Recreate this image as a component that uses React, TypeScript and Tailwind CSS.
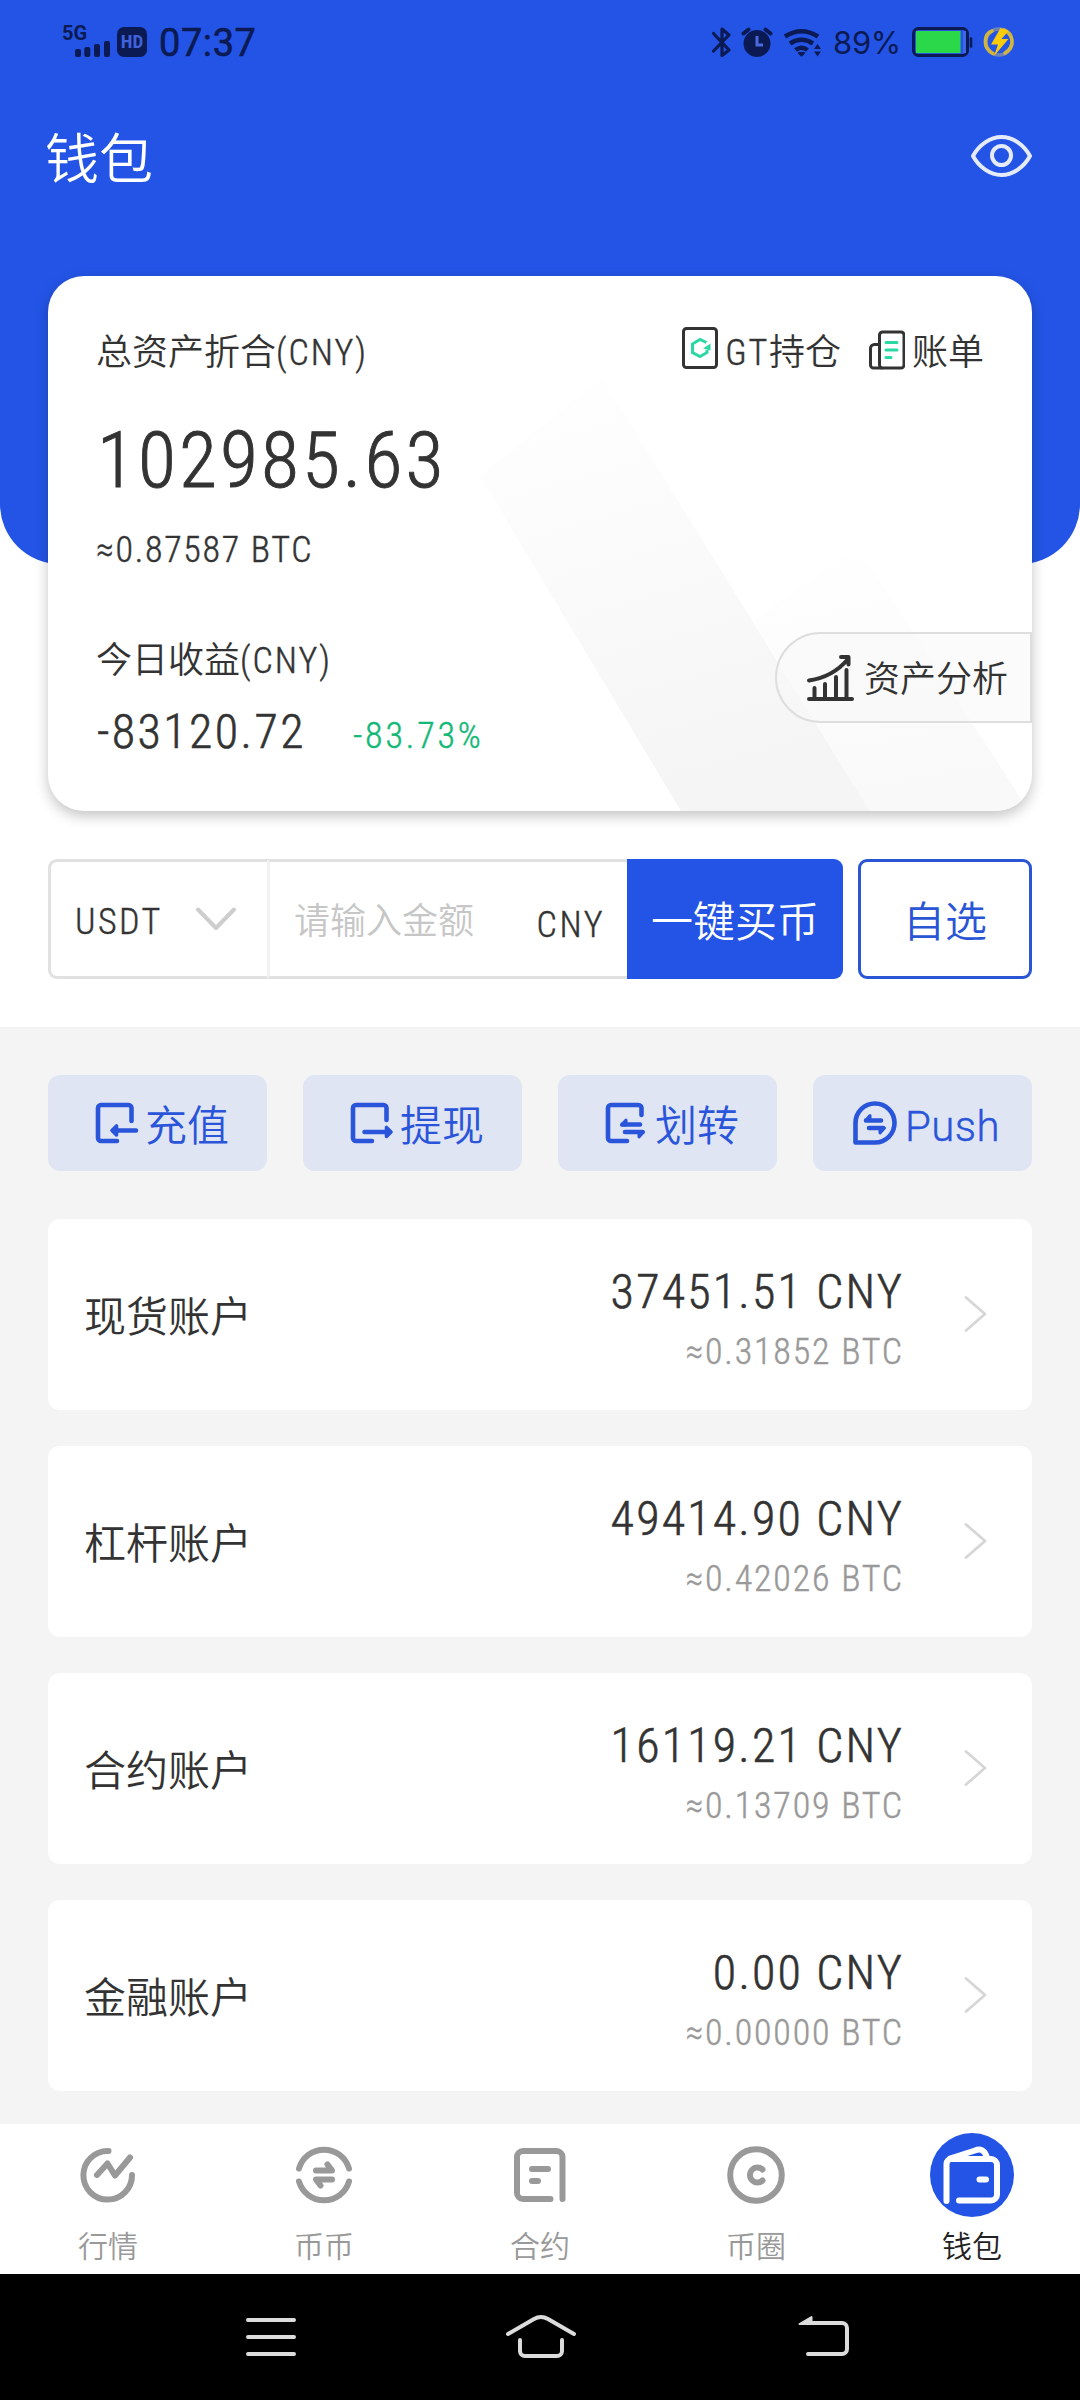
import type { ReactNode } from "react";

const BLUE = "#2354e6";
const INK = "#0b1a52";

/** Narrow DIN-like face for digits and Latin letters. */
function Din({ children, className = "tracking-[0.047em]" }: { children: ReactNode; className?: string }) {
  return (
    <span className={`whitespace-nowrap [font-stretch:75%] [-webkit-text-stroke:0.012em_currentColor] ${className}`}>
      {children}
    </span>
  );
}

function Icon({
  box,
  w,
  h,
  className = "",
  color = "currentColor",
  sw = 4,
  children,
}: {
  box: string;
  w: number;
  h: number;
  className?: string;
  color?: string;
  sw?: number;
  children: ReactNode;
}) {
  return (
    <svg
      viewBox={box}
      width={w}
      height={h}
      className={`shrink-0 ${className}`}
      fill="none"
      stroke={color}
      strokeWidth={sw}
      strokeLinecap="round"
      strokeLinejoin="round"
    >
      {children}
    </svg>
  );
}

function StatusBar() {
  return (
    <div className="flex h-[84px] items-center justify-between pr-[64px] pl-[62px] text-[#0b1a52]">
      <div className="flex items-center">
        <div className="relative h-[34px] w-[49px]">
          <span className="absolute top-[-2px] left-0 text-[20px] leading-[20px] font-bold">5G</span>
          <Icon box="75 39 36 18" w={36} h={18} color="none" className="absolute bottom-[1px] left-[13px]">
            <rect x="75" y="48" width="6" height="8" rx="2" fill={INK} />
            <rect x="84.3" y="46" width="6" height="10" rx="2" fill={INK} />
            <rect x="94" y="43" width="6" height="13" rx="2" fill={INK} />
            <rect x="104" y="40" width="6" height="16" rx="2" fill={INK} />
          </Icon>
        </div>
        <div className="ml-[6px] flex h-[30px] w-[30px] items-center justify-center rounded-[7px] bg-[#0b1a52] text-[19px] leading-[30px] font-bold text-[#3f63dc] [font-stretch:85%]">
          HD
        </div>
        <span className="ml-[12px] pt-px text-[38px] leading-[40px] font-normal tracking-[0.015em] [-webkit-text-stroke:0.6px_currentColor]">
          07:37
        </span>
      </div>
      <div className="flex items-center">
        <Icon box="710 26 22 32" w={22} h={32} sw={3.2}>
          <path d="M713.5 33.5L729 50l-7 5.500V29l7 6-15.500 16" />
        </Icon>
        <Icon box="740 26 34 32" w={34} h={32} className="ml-[8px]">
          <circle cx="757" cy="43.500" r="13.500" fill={INK} stroke="none" />
          <path d="M743.500 33.500l5-4M765.500 29.500l5 4" />
          <path d="M757 36v9h6" stroke="#4a6be0" strokeWidth="3" strokeLinecap="butt" strokeLinejoin="miter" />
        </Icon>
        <Icon box="782 26 42 32" w={42} h={32} sw={4.6} className="ml-[8px]">
          <path
            d="M785 36.500Q801.500 26 818 36.500M790 43.500Q801.500 36 813 43.500M795.500 50Q801.500 45.500 807.500 50"
            strokeLinecap="butt"
          />
          <path d="M799 53h5l-2.500 2.500z" fill={INK} strokeWidth="2" />
          <path d="M814 49l3.500-5 3.500 5zM814 51.500l3.500 5 3.500-5z" fill={INK} stroke="none" />
        </Icon>
        <span className="ml-[9px] w-[68px] pt-[2px] font-['Inter'] text-[31px] leading-[34px] font-normal tracking-[-0.3px]">
          89%
        </span>
        <Icon box="910 26 64 32" w={64} h={32} sw={3} className="ml-[9px]">
          <rect x="913.500" y="28.500" width="54" height="27" rx="5" />
          <rect x="916" y="31" width="44.500" height="22" fill="#2bd84a" stroke="none" />
          <path d="M964.500 31v22" stroke="#3f66e4" strokeWidth="3" strokeLinecap="butt" />
          <path d="M971 38.500v8" strokeWidth="2.500" />
        </Icon>
        <Icon box="982 26 34 32" w={34} h={32} sw={3.6} className="ml-[8px]">
          <circle cx="999" cy="42" r="13" stroke="#6f83b4" />
          <path d="M993 53.500C982 48 984 34 992 31M1004 30C1014 34 1015 47 1005 53" stroke="#d0b540" />
          <path d="M1000.500 28l-9.500 16.500h7L994 56l14.500-17h-7l7-8z" fill="#fccb0a" stroke="none" />
        </Icon>
      </div>
    </div>
  );
}

function BalanceCard() {
  return (
    <section className="relative mx-[48px] h-[535px] overflow-hidden rounded-[36px] bg-white px-[48px] pt-[50px] text-[36px] text-[#333] shadow-[0_5px_14px_rgba(0,0,0,0.24)]">
      <svg className="absolute inset-0" width="984" height="535" viewBox="48 276 984 535">
        <defs>
          <linearGradient id="beamA" x1="0" y1="0" x2="0.25" y2="1">
            <stop offset="0" stopColor="#ffffff" />
            <stop offset="0.4" stopColor="#fbfbfb" />
            <stop offset="1" stopColor="#f5f5f5" />
          </linearGradient>
          <linearGradient id="beamB" x1="0" y1="0" x2="0.2" y2="1">
            <stop offset="0" stopColor="#ffffff" />
            <stop offset="1" stopColor="#f9f9f9" />
          </linearGradient>
        </defs>
        <path d="M857 545L754 621L870 811H1029z" fill="url(#beamB)" />
        <path d="M602 378L480 476L681 811H870z" fill="url(#beamA)" />
      </svg>
      <div className="relative flex h-[54px] items-center justify-between leading-[54px]">
        <div>
          总资产折合<Din className="tracking-[0.055em]">(CNY)</Din>
        </div>
        <div className="flex items-center">
          <Icon box="684 326 36 43" w={36} h={43} sw={3} className="mt-[-11px] mr-[7px]">
            <rect x="685.500" y="328.500" width="33" height="39" rx="3" />
            <path
              d="M708.500 342.500L702 339.500l-7.500 4.500v8.500l7.500 4 7-4V350"
              stroke="#2bd8a4"
              strokeLinecap="butt"
              strokeLinejoin="miter"
            />
            <path d="M705 348.500l7.500-5v7z" fill="#2bd8a4" stroke="none" />
          </Icon>
          <Din className="tracking-[0.05em]">GT</Din>
          <span>持仓</span>
          <Icon box="869 328 37 41" w={37} h={41} sw={3} className="mt-[-8px] mr-[7px] ml-[27px]">
            <rect x="880.500" y="331" width="24.500" height="36" rx="3" />
            <path d="M880.500 343.500h-5a4 4 0 0 0-4 4V364a3 3 0 0 0 3 3h8" />
            <path d="M887 341.500h11M887 349h11M887 356.500h5" stroke="#2bd8a4" />
          </Icon>
          <span>账单</span>
        </div>
      </div>
      <div className="relative mt-[36px] h-[90px] pl-px text-[78px] leading-[90px]">
        <Din className="tracking-[0.039em]">102985.63</Din>
      </div>
      <div className="relative mt-[17px] h-[54px] leading-[54px]">
        <Din>≈0.87587 BTC</Din>
      </div>
      <div className="relative mt-[57px] h-[54px] leading-[54px]">
        今日收益<Din className="tracking-[0.055em]">(CNY)</Din>
      </div>
      <div className="relative mt-[14px] flex h-[60px] items-baseline leading-[60px]">
        <div className="w-[257px] pl-px text-[48px]">
          <Din className="tracking-[0.05em]">-83120.72</Din>
        </div>
        <Din className="tracking-[0.078em] text-[#12b877]">-83.73%</Din>
      </div>
      <div className="absolute top-[356px] right-0 flex h-[91px] w-[257px] items-center rounded-l-full border-2 border-[#dedede] bg-[#f8f8f8]/60 pl-[28px] leading-[54px]">
        <Icon box="805 653 50 47" w={50} h={47} sw={4}>
          <path d="M809 679.500Q833 676 848 658M841 656h7.500v7.500M809 698H852M814.500 687v11M825 683v15M836 676v22M846.500 669v29" />
        </Icon>
        <span className="ml-[9px] pt-[4px]">资产分析</span>
      </div>
    </section>
  );
}

function BuyRow() {
  return (
    <div className="mx-[48px] mt-[48px] flex h-[120px] text-[36px] leading-[54px] text-[#333]">
      <div className="flex w-[219px] items-center rounded-l-[9px] border-[3px] border-r-0 border-[#e1e1e1] pl-[24px]">
        <Din className="w-[96px] pt-[5px] tracking-[0.068em]">USDT</Din>
        <Icon box="194 905 44 28" w={44} h={28} color="#cdcdcd" className="ml-[23px]">
          <path d="M198 909.500L216 928l18-18.500" />
        </Icon>
      </div>
      <div className="flex flex-1 items-center border-y-[3px] border-l-[3px] border-y-[#e1e1e1] border-l-[#f1f1f1] pr-[22px] pl-[24px]">
        <span className="flex-1 pt-[6px] text-[#c6c6c6]">请输入金额</span>
        <Din className="pt-[11px] tracking-[0.07em]">CNY</Din>
      </div>
      <button className="w-[216px] rounded-r-[9px] bg-[#2354e6] pt-[7px] text-[42px] text-white">一键买币</button>
      <button className="ml-[15px] w-[174px] rounded-[9px] border-[3px] border-[#2a55d4] pt-[7px] text-[42px] text-[#2a55d4]">
        自选
      </button>
    </div>
  );
}

function ActionButton({ icon, children }: { icon: ReactNode; children: ReactNode }) {
  return (
    <button className="flex h-[96px] w-[219px] items-center rounded-[12px] bg-[#dfe5f3] text-[42px] leading-[54px] text-[#2a55da]">
      {icon}
      <span className="pt-[7px]">{children}</span>
    </button>
  );
}

function Actions() {
  return (
    <div className="flex justify-between">
      <ActionButton
        icon={
          <Icon box="48 1099 97 48" w={97} h={48} sw={4.6}>
            <path d="M131.500 1121V1108a3 3 0 0 0-3-3H101a3 3 0 0 0-3 3v30a3 3 0 0 0 3 3h16M136 1130.500H114" />
            <path d="M112 1130.500l4.500-4.500v9z" fill="currentColor" strokeWidth="3.600" />
          </Icon>
        }
      >
        充值
      </ActionButton>
      <ActionButton
        icon={
          <Icon box="303 1099 97 48" w={97} h={48} sw={4.6}>
            <path d="M386.500 1120V1108a3 3 0 0 0-3-3H356a3 3 0 0 0-3 3v30a3 3 0 0 0 3 3h16M364.500 1132H388" />
            <path d="M391 1132l-4.500-4.500v9z" fill="currentColor" strokeWidth="3.600" />
          </Icon>
        }
      >
        提现
      </ActionButton>
      <ActionButton
        icon={
          <Icon box="558 1099 97 48" w={97} h={48} sw={4.6}>
            <path d="M641.500 1115V1108a3 3 0 0 0-3-3H611a3 3 0 0 0-3 3v30a3 3 0 0 0 3 3h16M622.500 1124.500H640M625 1132H642.500" />
            <path d="M621.500 1125l4.500-5v5zM643.500 1132l-4.500 5v-5z" fill="currentColor" strokeWidth="3" />
          </Icon>
        }
      >
        划转
      </ActionButton>
      <ActionButton
        icon={
          <Icon box="813 1099 92 48" w={92} h={48} sw={4.6}>
            <path d="M855.500 1142.500V1123a19.500 19.500 0 1 1 19.500 19.500zM866 1120.500H881M869 1128H883" />
            <path d="M865.500 1120.500l4.500-5v5zM884.500 1128l-4.500 5v-5z" fill="currentColor" strokeWidth="3" />
          </Icon>
        }
      >
        <span className="tracking-[0.01em] [-webkit-text-stroke:0.4px_currentColor]">Push</span>
      </ActionButton>
    </div>
  );
}

const accounts = [
  { name: "现货账户", cny: "37451.51 CNY", btc: "≈0.31852 BTC" },
  { name: "杠杆账户", cny: "49414.90 CNY", btc: "≈0.42026 BTC" },
  { name: "合约账户", cny: "16119.21 CNY", btc: "≈0.13709 BTC" },
  { name: "金融账户", cny: "0.00 CNY", btc: "≈0.00000 BTC" },
];

function AccountCard({ name, cny, btc }: { name: string; cny: string; btc: string }) {
  return (
    <div className="flex h-[191px] items-center rounded-[12px] bg-white pr-[44px] pl-[36px]">
      <span className="flex-1 pt-[7px] text-[42px] leading-[54px] text-[#333]">{name}</span>
      <div className="flex flex-col items-end pt-[15px]">
        <Din className="text-[48px] leading-[60px] tracking-[0.046em] text-[#333]">{cny}</Din>
        <Din className="text-[36px] leading-[60px] tracking-[0.05em] text-[#999]">{btc}</Din>
      </div>
      <Icon box="960 1293 28 44" w={28} h={44} sw={2.8} color="#d6d6d6" className="mt-[-2px] ml-[56px]">
        <path d="M966 1298.500l19 16.500-19 16.500" />
      </Icon>
    </div>
  );
}

function TabBar() {
  return (
    <nav className="flex h-[150px] bg-white text-[30px] leading-[36px] text-[#999]">
      <Tab label="行情">
        <Icon box="66 2133 84 84" w={84} h={84} sw={6}>
          <path d="M108.500 2151A24.300 24.300 0 1 0 132 2175M97 2175l10.500-11.500 7.500 12L130 2157.500" />
        </Icon>
      </Tab>
      <Tab label="币币">
        <Icon box="282 2133 84 84" w={84} h={84} sw={6}>
          <path d="M299 2168.500A26 26 0 0 1 349 2168.500M299 2181.500A26 26 0 0 0 349 2181.500M316 2170.500H332l-4.500-6M332 2179.500H316l4.500 6" />
        </Icon>
      </Tab>
      <Tab label="合约">
        <Icon box="498 2133 84 84" w={84} h={84} sw={6}>
          <path d="M562.500 2199V2157a6 6 0 0 0-6-6H523a6 6 0 0 0-6 6v36a6 6 0 0 0 6 6h27.500M532 2169H548M532 2181H538" />
        </Icon>
      </Tab>
      <Tab label="币圈">
        <Icon box="714 2133 84 84" w={84} h={84} sw={6}>
          <circle cx="756" cy="2175" r="25.800" />
          <path d="M762.500 2169.500a7.500 7.500 0 1 0 0 11" />
        </Icon>
      </Tab>
      <Tab label="钱包" active>
        <Icon box="930 2133 84 84" w={84} h={84} sw={6} color="#fff">
          <circle cx="972" cy="2175" r="42" fill={BLUE} stroke="none" />
          <path d="M946.500 2201V2164a5 5 0 0 1 5-5H991a6 6 0 0 1 6 6v29.500a6 6 0 0 1-6 6H959M950 2158.500L975 2150.500Q983 2147 986.500 2156M979.500 2179.500H986" />
        </Icon>
      </Tab>
    </nav>
  );
}

function Tab({ label, active = false, children }: { label: string; active?: boolean; children: ReactNode }) {
  return (
    <div className={`flex flex-1 flex-col items-center pt-[9px] ${active ? "text-[#222]" : ""}`}>
      {children}
      <span className="mt-[12px]">{label}</span>
    </div>
  );
}

function SystemBar() {
  return (
    <div className="flex h-[126px] items-center bg-black pl-[244px]">
      <Icon box="244 2313 54 48" w={54} h={48} color="#dcdcdc">
        <path d="M248 2320H294M248 2337H294M248 2354H294" />
      </Icon>
      <Icon box="504 2313 74 48" w={74} h={48} color="#dcdcdc" className="ml-[206px]">
        <path d="M508 2334L534 2319Q541 2315 548 2319L574 2334M520 2340V2351a5 5 0 0 0 5 5H557a5 5 0 0 0 5-5V2340" />
      </Icon>
      <Icon box="796 2313 54 48" w={54} h={48} color="#dcdcdc" className="ml-[218px]">
        <path d="M806 2323H842a5 5 0 0 1 5 5v21a5 5 0 0 1-5 5H808" />
        <path d="M799.500 2324l12-7v7z" fill="#dcdcdc" strokeWidth="2" />
      </Icon>
    </div>
  );
}

export default function App() {
  return (
    <div className="h-[2400px] w-[1080px] overflow-hidden bg-white font-['Roboto','Noto_Sans_CJK_SC',sans-serif] font-[350]">
      <header className="h-[564px] rounded-b-[60px] bg-[#2354e6]">
        <StatusBar />
        <div className="flex h-[144px] items-center justify-between pr-[46px] pl-[45px]">
          <h1 className="pt-[9px] text-[54px] leading-[64px] text-white">钱包</h1>
          <Icon box="969 133 65 46" w={65} h={46} sw={4} color="#e6ebfb">
            <path d="M973 156C979 145 990 137 1001.500 137S1024 145 1030 156C1024 167 1013 175 1001.500 175S979 167 973 156z" />
            <circle cx="1001.500" cy="155.500" r="9.500" />
          </Icon>
        </div>
      </header>
      <div className="mt-[-288px]">
        <BalanceCard />
      </div>
      <BuyRow />
      <main className="mt-[48px] h-[1097px] bg-[#f4f4f4] px-[48px] pt-[48px]">
        <Actions />
        <div className="mt-[48px] flex flex-col gap-[36px]">
          {accounts.map((a) => (
            <AccountCard key={a.name} {...a} />
          ))}
        </div>
      </main>
      <TabBar />
      <SystemBar />
    </div>
  );
}
